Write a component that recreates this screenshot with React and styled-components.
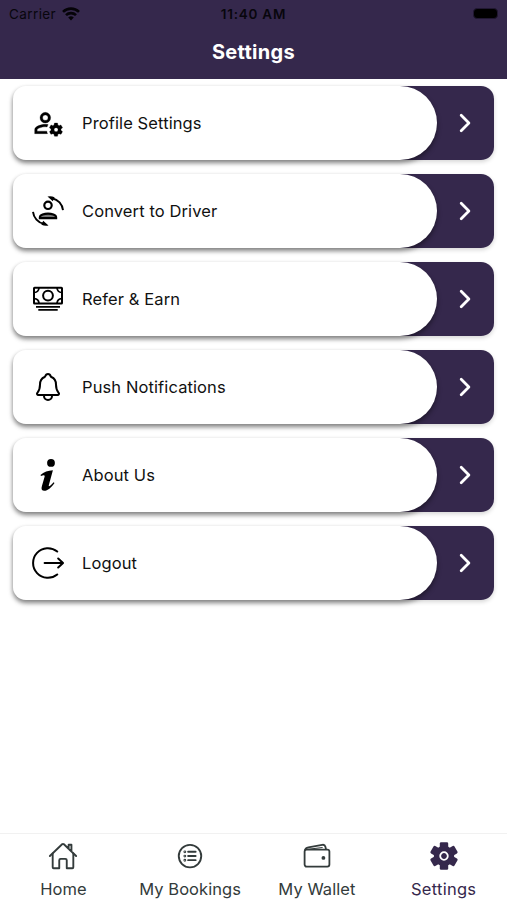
import React, { useState } from 'react';
import styled, { createGlobalStyle } from 'styled-components';
import { IoHomeOutline, IoListCircleOutline, IoNotificationsOutline } from 'react-icons/io5';

const GlobalStyle = createGlobalStyle`
    * {
        box-sizing: border-box;
    }

    body {
        margin: 0;
        background-color: white;
        font-family: Inter, "Liberation Sans", sans-serif;
    }
`

const Screen = styled.div`
    display: flex;
    flex-direction: column;
    width: 507px;
    height: 900px;
    overflow: hidden;
    background-color: white;
`

const Header = styled.header`
    height: 79px;
    flex-shrink: 0;
    background-color: #35284c;
`

const StatusBar = styled.div`
    display: grid;
    grid-template-columns: 1fr auto 1fr;
    align-items: center;
    height: 27px;
    padding: 0 9px;
    color: #08060d;
    font-size: 13.5px;
`

const Carrier = styled.div`
    display: flex;
    align-items: center;
    gap: 6px;
    letter-spacing: 0.4px;
`

const Clock = styled.div`
    font-weight: 600;
    letter-spacing: 0.75px;
`

const Battery = styled.div`
    justify-self: end;
    width: 25px;
    height: 11px;
    border: 1px solid #211832;
    border-radius: 4px;
    background-color: black;
`

const Title = styled.h1`
    margin: 0;
    color: white;
    font-size: 20px;
    font-weight: 700;
    letter-spacing: 0.3px;
    line-height: 50px;
    text-align: center;
`

const List = styled.main`
    display: flex;
    flex-direction: column;
    flex: 1;
    gap: 14px;
    padding: 7px 13px;
`

const Row = styled.button`
    display: flex;
    width: 481px;
    height: 74px;
    padding: 0;
    border: 0;
    border-radius: 13px;
    background: linear-gradient(to right, transparent 380px, #35284c 380px);
    box-shadow: 0 2px 4px rgba(0, 0, 0, 0.16);
    font-family: inherit;
    cursor: pointer;
`

const RowPanel = styled.div`
    display: flex;
    align-items: center;
    width: 424px;
    height: 74px;
    padding-left: 19px;
    gap: 18px;
    border-radius: 13px 37px 37px 13px;
    background-color: white;
    box-shadow: 0 3px 5px rgba(0, 0, 0, 0.42);
    color: black;

    svg {
        flex-shrink: 0;
    }
`

const RowLabel = styled.span`
    color: #111;
    font-size: 16.5px;
    letter-spacing: 0.11px;
`

const RowArrow = styled.div`
    display: flex;
    flex: 1;
    align-items: center;
    justify-content: center;
    height: 74px;
    padding-right: 1px;
`

const TabBar = styled.nav`
    display: grid;
    grid-template-columns: repeat(4, 1fr);
    height: 67px;
    flex-shrink: 0;
    border-top: 1px solid #f1f1f1;
`

const Tab = styled.button`
    display: flex;
    flex-direction: column;
    align-items: center;
    padding: 6px 0 0;
    border: 0;
    background: none;
    color: ${props => props.$active ? '#35284c' : '#333b3b'};
    font-family: inherit;
    font-size: 16.5px;
    letter-spacing: ${props => props.$active ? '0.25px' : '0.05px'};
    white-space: nowrap;
    cursor: pointer;
`

const TabIcon = styled.span`
    display: flex;
    align-items: center;
    justify-content: center;
    height: 32px;
    margin-bottom: 7px;
`

const Wifi = () => (
    <svg width="18" height="14" viewBox="0 0 18 14" fill="none" stroke="#050308" strokeWidth="2.6">
        <path d="M1 4.9a11.4 11.4 0 0 1 16 0" />
        <path d="M4 8.2a7.1 7.1 0 0 1 10 0" />
        <path d="M9 13.5 6.2 10.6a4 4 0 0 1 5.6 0z" fill="#050308" stroke="none" />
    </svg>
)

const AccountCog = () => (
    <svg width="32" height="32" viewBox="0 0 24 24" fill="currentColor" stroke="currentColor" strokeWidth="0.2">
        <path d="M10 4a4 4 0 1 0 0 8a4 4 0 0 0 0-8m0 2a2 2 0 1 1 0 4a2 2 0 0 1 0-4M17 12c-.16 0-.24.08-.24.21l-.26 1.29c-.22.18-.54.34-.78.5l-1.28-.5c-.08 0-.24 0-.32.1l-.96 1.76c-.08.08-.08.24.08.32l1.04.82v1l-1.04.82c-.08.08-.16.24-.08.32l.96 1.76c.08.1.24.1.32.1l1.28-.5c.24.16.56.32.78.5l.26 1.29c0 .13.08.21.24.21h2c.08 0 .24-.08.24-.21l.16-1.29c.32-.18.64-.34.88-.5l1.22.5c.14 0 .3 0 .3-.1l1.04-1.76c.08-.08 0-.24-.08-.32l-1.04-.82v-1l1.04-.82c.08-.08.16-.24.08-.32L21.8 13.6c0-.1-.16-.1-.3-.1l-1.22.5c-.24-.16-.56-.32-.88-.5l-.16-1.29c0-.13-.16-.21-.24-.21zM10 13c-2.67 0-8 1.33-8 4v3h9.67a7 7 0 0 1-.58-1.9H3.9V17c0-.64 3.13-2.1 6.1-2.1q.65 0 1.3.1c.2-.64.47-1.24.82-1.79C11.34 13.08 10.6 13 10 13m8.04 2.5a1.5 1.5 0 1 1 0 3a1.5 1.5 0 0 1 0-3" />
    </svg>
)

const ConvertUser = () => (
    <svg width="32" height="32" viewBox="0 0 32 32" fill="none" stroke="currentColor" strokeWidth="2.2">
        <circle cx="16" cy="10.3" r="3.7" />
        <path d="M7.9 23.1v-.8c0-2.5 4.6-3.7 8.1-3.7s8.1 1.2 8.1 3.7v.8z" fill="#777" />
        <path d="M20.2 3.2A13.8 13.8 0 0 1 31 15.2M11.8 28.8A13.8 13.8 0 0 1 1 16.8" strokeWidth="1.9" />
        <path d="M15.5 1.6Q19 .7 22.6 2.3L20.8 6.2zM16.5 30.4Q13 31.3 9.4 29.7l1.8-3.9z" fill="currentColor" stroke="none" />
    </svg>
)

const Cash = () => (
    <svg width="32" height="32" viewBox="0 0 32 32" fill="none" stroke="currentColor" strokeWidth="2">
        <rect x="2" y="4.7" width="28" height="15.8" rx="0.6" />
        <circle cx="16" cy="12.6" r="4.9" />
        <path d="M7 5Q6.5 9.2 2.4 9.5M25 5Q25.5 9.2 29.6 9.5M7 20.2Q6.5 16 2.4 15.7M25 20.2Q25.5 16 29.6 15.7" strokeWidth="1.7" />
        <path d="M4 23.8h24M6.3 26.9h19.4" strokeWidth="1.8" />
    </svg>
)

const InfoMark = () => (
    <svg width="32" height="32" viewBox="0 0 32 32" fill="currentColor">
        <circle cx="19" cy="3.9" r="3.9" />
        <path d="M8.5 15.9c3.4-3 7.5-4.4 12.4-4.6l-4.1 14.9c-.5 2 1.3 1.1 4.8-3l.9.8C19 29 15.5 32 12 31.8c-2.8-.2-2.7-2.5-2-5l2.6-9c.5-2-1.3-2-3.6-.8z" />
    </svg>
)

const Logout = () => (
    <svg width="32" height="32" viewBox="0 0 32 32" fill="none" stroke="currentColor" strokeWidth="2" strokeLinecap="round" strokeLinejoin="round">
        <path d="M25.2 4.5a14.8 14.8 0 1 0 0 23M12.6 16h18.2M26.2 11.5l4.8 4.5-4.8 4.5" />
    </svg>
)

const Chevron = () => (
    <svg width="14" height="20" viewBox="0 0 14 20" fill="none" stroke="white" strokeWidth="2.8" strokeLinecap="round" strokeLinejoin="round">
        <path d="m3.2 2.3 7.7 7.7-7.7 7.7" />
    </svg>
)

const Wallet = () => (
    <svg width="28" height="28" viewBox="0 0 28 28" fill="none" stroke="currentColor" strokeWidth="1.8" strokeLinejoin="round">
        <rect x="1.6" y="7.6" width="24.8" height="17" rx="2" />
        <path d="M1.9 8.5c.3-1.9 1.5-2.7 3.5-3.1l13.8-2.6c1.7-.3 2.8.3 3.2 1.9l.7 2.9" />
        <path d="M4 7.4 19.6 5.5" strokeWidth="1" />
        <circle cx="20.4" cy="15.9" r="1.9" fill="currentColor" stroke="none" />
    </svg>
)

const Gear = () => (
    <svg width="28" height="28" viewBox="-14 -14 28 28" fill="currentColor">
        <circle r="10.2" />
        {[0, 60, 120].map(angle => (
            <rect key={angle} x="-4.2" y="-13.8" width="8.4" height="27.6" rx="1.3" transform={`rotate(${angle})`} />
        ))}
        <circle r="3.8" fill="none" stroke="white" strokeWidth="1.8" />
    </svg>
)

const rows = [
    { label: 'Profile Settings', icon: <AccountCog /> },
    { label: 'Convert to Driver', icon: <ConvertUser /> },
    { label: 'Refer & Earn', icon: <Cash /> },
    { label: 'Push Notifications', icon: <IoNotificationsOutline size={32} /> },
    { label: 'About Us', icon: <InfoMark /> },
    { label: 'Logout', icon: <Logout /> },
]

const tabs = [
    { label: 'Home', icon: <IoHomeOutline size={30} /> },
    { label: 'My Bookings', icon: <IoListCircleOutline size={30} /> },
    { label: 'My Wallet', icon: <Wallet /> },
    { label: 'Settings', icon: <Gear /> },
]

const App = () => {
    const [activeTab, changeTab] = useState('Settings');

    return (
        <Screen>
            <GlobalStyle />
            <Header>
                <StatusBar>
                    <Carrier>Carrier <Wifi /></Carrier>
                    <Clock>11:40 AM</Clock>
                    <Battery />
                </StatusBar>
                <Title>Settings</Title>
            </Header>
            <List>
                {rows.map(row => (
                    <Row key={row.label}>
                        <RowPanel>
                            {row.icon}
                            <RowLabel>{row.label}</RowLabel>
                        </RowPanel>
                        <RowArrow><Chevron /></RowArrow>
                    </Row>
                ))}
            </List>
            <TabBar>
                {tabs.map(tab => (
                    <Tab key={tab.label} $active={tab.label === activeTab} onClick={() => changeTab(tab.label)}>
                        <TabIcon>{tab.icon}</TabIcon>
                        {tab.label}
                    </Tab>
                ))}
            </TabBar>
        </Screen>
    )
}

export default App;
